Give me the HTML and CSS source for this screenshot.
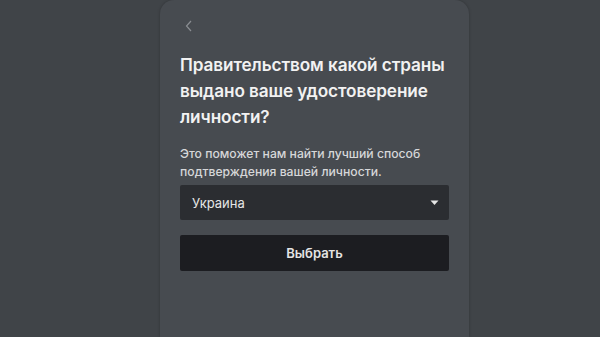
FILE: index.html
```html
<!DOCTYPE html>
<html lang="ru">
<head>
<meta charset="utf-8">
<link rel="stylesheet" href="styles.css">
</head>
<body>
<div class="page">
  <div class="card">
    <div class="back">
      <svg width="8" height="12" viewBox="0 0 8 12"><path d="M6 1 L1.5 6 L6 11" fill="none" stroke="#8a8d92" stroke-width="1.2"/></svg>
    </div>
    <h1 class="title">Правительством какой страны выдано ваше удостоверение личности?</h1>
    <p class="sub">Это поможет нам найти лучший способ подтверждения вашей личности.</p>
    <div class="select">
      <span>Украина</span>
      <svg width="9" height="6" viewBox="0 0 9 6"><path d="M0.5 0.5 H8.5 L4.5 5 Z" fill="#e6e6e6"/></svg>
    </div>
    <div class="btn">Выбрать</div>
  </div>
</div>
</body>
</html>
```
FILE: styles.css
```css
html, body {
  margin: 0;
  padding: 0;
  background: #404448;
  height: 100%;
  overflow: hidden;
}
.page {
  padding-left: 160px;
}
.card {
  width: 309px;
  box-sizing: border-box;
  height: 337px;
  background: #474b50;
  border-radius: 14px 14px 0 0;
  padding: 20px 20px 0 20px;
  box-shadow: 0 0 3px rgba(0,0,0,0.25);
  font-family: Inter, "Noto Sans", sans-serif;
}
.back {
  height: 14px;
  padding-left: 5px;
}
.back svg { display: block; }
.title {
  margin: 18px 0 0 0;
  font-size: 17.2px;
  line-height: 26px;
  font-weight: 600;
  color: #f2f2f2;
  letter-spacing: -0.1px;
}
.sub {
  margin: 15px 0 0 0;
  font-size: 12.2px;
  line-height: 18px;
  font-weight: 500;
  color: #d6d7d9;
}
.select {
  margin-top: 4px;
  height: 35px;
  background: #2b2d31;
  border-radius: 2px;
  display: flex;
  align-items: center;
  justify-content: space-between;
  padding: 0 10px 0 12px;
  font-size: 13px;
  color: #e6e6e6;
}
.select svg { display: block; }
.btn {
  margin-top: 15px;
  height: 36px;
  background: #1c1d21;
  border-radius: 2px;
  display: flex;
  align-items: center;
  justify-content: center;
  font-size: 13px;
  font-weight: 600;
  color: #e4e4e4;
}
```
